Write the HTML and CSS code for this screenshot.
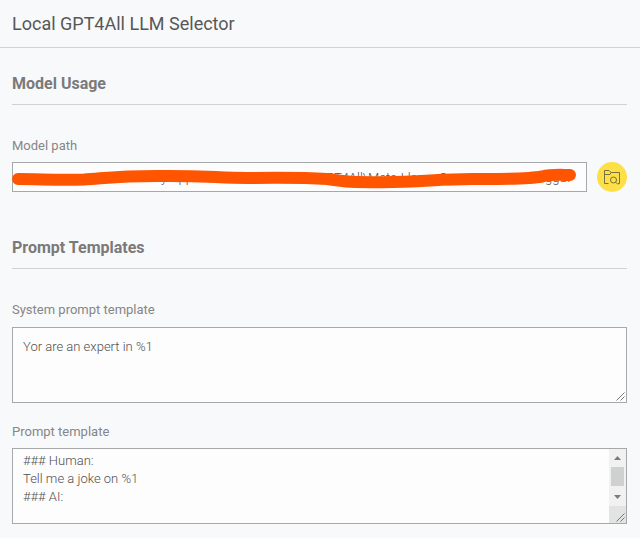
FILE: index.html
```html
<!DOCTYPE html>
<html lang="en">
<head>
    <meta charset="UTF-8">
    <meta name="viewport" content="width=device-width, initial-scale=1.0">
    <title>Local GPT4All LLM Selector</title>
    <link rel="stylesheet" href="styles.css">
</head>
<body>
    <header class="title-bar">
        <h1>Local GPT4All LLM Selector</h1>
    </header>
    <main class="content">
        <section class="model-usage">
            <h2>Model Usage</h2>
            <div class="label">Model path</div>
            <div class="path-row">
                <div class="path-field">
                    <span class="part part-app">y App</span>
                    <span class="part part-model">GPT4All\Meta-Llama-3</span>
                    <span class="part part-ext">.gguf</span>
                    <svg class="marker" width="575" height="30" viewBox="0 0 575 30">
                        <path d="M6 17 C30 17 45 18.500 72 17.500 C95 16 105 14 145 14 C195 13.500 205 16 235 16 C275 15.500 292 15.500 315 17 C335 20 340 20.200 370 20.200 C410 20.200 425 17 460 17 C490 17 515 17.500 530 14.500 C540 12 550 13 558 13" />
                    </svg>
                </div>
                <button class="browse" type="button" aria-label="Browse">
                    <svg width="18" height="16" viewBox="0 0 18 16">
                        <path d="M5.500 14.500H1.500V1.500H6L8 3.500H16.500V14.500H15M8 3.500L7 5.500H1.500" />
                        <circle cx="10.500" cy="11" r="3" />
                        <path d="M12.700 13.200L15 15.500" />
                    </svg>
                </button>
            </div>
        </section>
        <section class="templates">
            <h2>Prompt Templates</h2>
            <div class="label">System prompt template</div>
            <div class="text-box">
                <textarea class="system-text" spellcheck="false">Yor are an expert in %1</textarea>
                <svg class="grip" width="9" height="9" viewBox="0 0 9 9"><path d="M0.500 8.500L8.500 0.500M4.500 8.500L8.500 4.500" /></svg>
            </div>
            <div class="label label-prompt">Prompt template</div>
            <div class="text-box">
                <textarea class="prompt-text" spellcheck="false">### Human:
Tell me a joke on %1
### AI:</textarea>
                <div class="scrollbar">
                    <svg width="17" height="17" viewBox="0 0 17 17"><path d="M5 11L8.500 7L12 11Z" /></svg>
                    <div class="thumb"></div>
                    <svg class="down" width="17" height="17" viewBox="0 0 17 17"><path d="M5 6L8.500 10L12 6Z" /></svg>
                    <div class="corner"></div>
                </div>
                <svg class="grip" width="9" height="9" viewBox="0 0 9 9"><path d="M0.500 8.500L8.500 0.500M4.500 8.500L8.500 4.500" /></svg>
            </div>
        </section>
    </main>
</body>
</html>
```

FILE: styles.css
```css
* {
    box-sizing: border-box;
}
body {
    margin: 0;
    height: 538px;
    overflow: hidden;
    background-color: #f8f9fb;
    color: #7a7a7a;
    font-family: Roboto, sans-serif;
    font-size: 13px;
}
.title-bar {
    height: 48px;
    padding-left: 12px;
    border-bottom: 1px solid #d0d1d3;
}
h1 {
    margin: 0;
    color: #575757;
    font-size: 18px;
    font-weight: 400;
    line-height: 47px;
}
.content {
    padding: 0 13px 0 12px;
}
h2 {
    margin: 0;
    height: 57px;
    padding-top: 26px;
    border-bottom: 1px solid #d0d1d3;
    font-size: 16px;
    font-weight: 700;
    line-height: 20px;
}
.label {
    height: 57px;
    padding-top: 33px;
    color: #868686;
    line-height: 16px;
}
.path-row {
    display: flex;
    align-items: center;
    gap: 10px;
}
.path-field {
    position: relative;
    display: flex;
    flex: 1;
    height: 30px;
    border: 1px solid #a6a8aa;
    background-color: #fdfdfd;
    color: #505050;
    font-weight: 300;
    line-height: 30px;
    white-space: nowrap;
}
.part-app {
    margin-left: 148px;
    width: 156px;
}
.part-model {
    width: 225px;
}
/* hand-drawn stroke over the path */
.marker {
    position: absolute;
    top: -1px;
    left: -1px;
}
.marker path {
    fill: none;
    stroke: #ff5500;
    stroke-width: 12;
    stroke-linecap: round;
    stroke-linejoin: round;
}
.browse {
    display: flex;
    align-items: center;
    justify-content: center;
    width: 30px;
    height: 30px;
    padding: 0;
    border: none;
    border-radius: 50%;
    background-color: #fddf48;
}
.browse svg {
    fill: none;
    stroke: #77703f;
    stroke-width: 1;
}
.templates {
    padding-top: 20px;
}
.templates .label {
    height: 58px;
}
.text-box {
    position: relative;
    display: flex;
    height: 76px;
    border: 1px solid #a6a8aa;
    background-color: #fdfdfd;
}
textarea {
    flex: 1;
    margin: 0;
    padding: 10px;
    border: none;
    outline: none;
    resize: none;
    overflow: hidden;
    background: transparent;
    color: #505050;
    font-family: inherit;
    font-size: 13px;
    font-weight: 300;
    line-height: 18px;
}
.prompt-text {
    padding-top: 3px;
}
.templates .label-prompt {
    height: 45px;
    padding-top: 21px;
}
.scrollbar {
    display: flex;
    flex-direction: column;
    align-items: center;
    width: 17px;
    background-color: #f1f1f1;
}
.scrollbar svg {
    flex: none;
    fill: #7b7b7b;
}
.thumb {
    width: 13px;
    height: 19px;
    margin-top: 1px;
    background-color: #cfd1d1;
}
.down {
    margin-top: 3px;
}
.corner {
    width: 17px;
    height: 17px;
    margin-top: auto;
    background-color: #e2e4e4;
}
.grip {
    position: absolute;
    right: 1px;
    bottom: 1px;
    fill: none;
    stroke: #777;
    stroke-width: 1;
}
```
